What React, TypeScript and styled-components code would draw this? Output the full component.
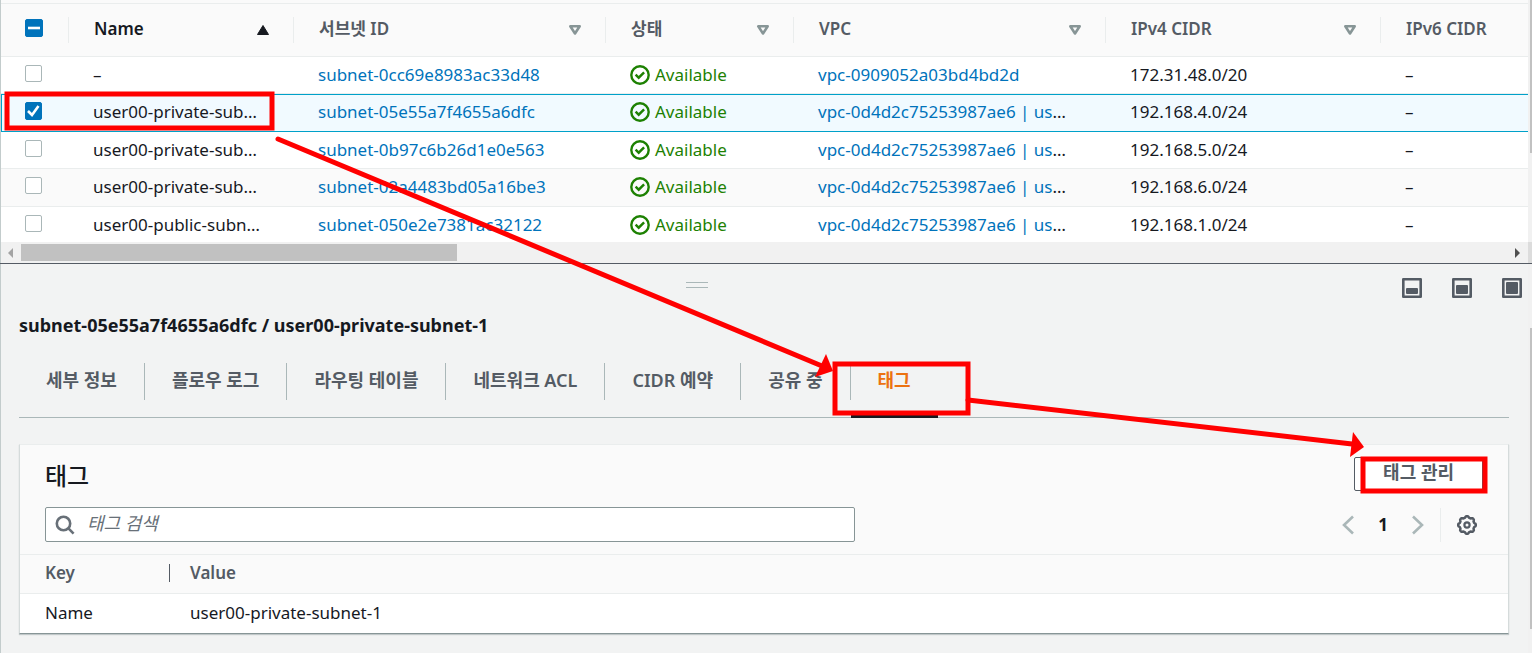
import React from "react";
import styled, { createGlobalStyle, css } from "styled-components";

const Global = createGlobalStyle`
  *, *::before, *::after { box-sizing: border-box; }
  html, body, #root { height: 100%; }
  body {
    margin: 0;
    overflow: hidden;
    background: #f2f3f3;
    color: #16191f;
    font-family: "Noto Sans", "Noto Sans CJK KR", sans-serif;
    font-size: 17px;
    line-height: 24px;
  }
  button, input { font: inherit; color: inherit; margin: 0; }
  a { color: #0073bb; text-decoration: none; }
`;

const Page = styled.div`
  position: relative;
  height: 100%;
  display: flex;
  flex-direction: column;
`;

const ListPane = styled.section`
  display: grid;
  grid-template-columns: minmax(0, 1fr) 4px;
  flex: none;
  background: #fff;
  border-bottom: 1px solid #545b64;
`;

const ListScroll = styled.div`
  overflow: hidden;
  border-left: 1px solid #c3cccc;
  padding-top: 3px;
  background: #fafafa;
`;

const SideTrack = styled.div`
  display: flex;
  flex-direction: column;
  justify-content: space-between;
  background: #f1f1f1;
`;

const SideThumb = styled.div<{ $size: number }>`
  height: ${(p) => p.$size}px;
  margin-left: 2px;
  background: #c1c1c1;
`;

const TrackCorner = styled.div`
  height: 21px;
  background: #dcdcdc;
`;

const SubnetTable = styled.table`
  width: 100%;
  table-layout: fixed;
  border-collapse: separate;
  border-spacing: 0;
  border-top: 1px solid #eaeded;
`;

const Col = styled.col<{ $w?: number }>`
  width: ${(p) => (p.$w ? `${p.$w}px` : "auto")};
`;

const HeadCell = styled.th<{ $sorted?: boolean }>`
  height: 53px;
  padding: 0;
  text-align: left;
  font-weight: 600;
  color: ${(p) => (p.$sorted ? "#16191f" : "#545b64")};
  border-bottom: 1px solid #eaeded;
`;

const HeadInner = styled.div<{ $last?: boolean; $tick?: boolean }>`
  display: flex;
  align-items: center;
  justify-content: space-between;
  height: 26px;
  padding: ${(p) => (p.$tick ? "0 0 4px 24px" : "0 23px 0 25px")};
  border-right: ${(p) => (p.$last ? "0" : "1px solid #eaeded")};
`;

const HeadLabel = styled.span`
  padding-bottom: 3px;
`;

const CheckCell = styled.td`
  padding: 0 0 3px 24px;
`;

const Row = styled.tr<{ $selected?: boolean }>`
  height: 37px;
  background: #fff;
  &:nth-child(even) { height: 38px; background: #fafafa; }
  &:nth-child(even) td { padding-bottom: 2px; }
  &:nth-child(even) td:first-child { padding-bottom: 4px; }
  &:last-child { height: 35px; }
  td { border-bottom: 1px solid #eaeded; }
  &:last-child td { border-bottom: 0; }
  ${(p) =>
    p.$selected &&
    css`
      &&:nth-child(even) { background: #f1faff; }
      && td { border-top: 1px solid #00a1c9; border-bottom: 1px solid #00a1c9; }
      && td:first-child { border-left: 1px solid #00a1c9; padding-left: 23px; }
    `}
`;

const Cell = styled.td`
  padding: 0 0 0 24px;
  white-space: nowrap;
`;

const Tick = styled.input`
  appearance: none;
  display: block;
  width: 17px;
  height: 17px;
  border: 1px solid #aab7b8;
  border-radius: 2px;
  background: #fff;
  &:checked {
    height: 18px;
    border-color: #0073bb;
    background: #0073bb;
  }
`;

const TickBox = styled.label<{ $wide?: boolean }>`
  display: grid;
  width: ${(p) => (p.$wide ? "18px" : "17px")};
  > * { grid-area: 1 / 1; width: 100%; }
  svg { pointer-events: none; z-index: 1; }
`;

const Status = styled.span`
  display: flex;
  align-items: center;
  gap: 5px;
  color: #1d8102;
`;

const ScrollBar = styled.div`
  display: flex;
  align-items: center;
  justify-content: space-between;
  height: 21px;
  padding-right: 7px;
  background: #f1f1f1;
`;

const ScrollLead = styled.div`
  display: flex;
  align-items: center;
  gap: 7px;
  width: 30%;
  height: 17px;
  padding-left: 6px;
`;

const ScrollThumb = styled.div`
  flex: 1;
  height: 17px;
  background: #c1c1c1;
`;

const DetailPane = styled.section`
  flex: 1;
  min-height: 0;
  display: grid;
  grid-template-columns: minmax(0, 1fr) 4px;
  border-left: 1px solid #c3cccc;
`;

const DetailBody = styled.div`
  padding: 0 19px 0 18px;
`;

const DetailTrack = styled(SideTrack)`
  padding-top: 64px;
`;

const SplitBar = styled.div`
  display: grid;
  grid-template-columns: 1fr auto;
  align-items: center;
  gap: 27px;
  height: 48px;
  margin-right: -13px;
`;

const Grip = styled.div`
  width: 22px;
  height: 6px;
  margin-bottom: 6px;
  justify-self: center;
  border: solid #aab7b8;
  border-width: 1px 0;
`;

const LayoutButtons = styled.div`
  display: flex;
  justify-content: flex-end;
  gap: 30px;
`;

const IconButton = styled.button`
  display: flex;
  padding: 0;
  border: 0;
  background: none;
  color: #545b64;
`;

const PaneTitle = styled.h2`
  margin: 1px 0;
  font-size: 18px;
  line-height: 24px;
  font-weight: 700;
`;

const TabList = styled.div`
  display: flex;
  height: 80px;
  padding-top: 25px;
  border-bottom: 1px solid #aab7b8;
`;

const Tab = styled.button<{ $active?: boolean }>`
  position: relative;
  height: 37px;
  padding: 0 27px 4px;
  border: 0;
  border-right: ${(p) => (p.$active ? "0" : "1px solid #aab7b8")};
  background: none;
  font-size: 18px;
  font-weight: 600;
  white-space: nowrap;
  color: ${(p) => (p.$active ? "#ec7211" : "#545b64")};
  ${(p) =>
    p.$active &&
    css`
      &::after {
        content: "";
        position: absolute;
        left: 0;
        right: 0;
        bottom: -18px;
        height: 3px;
        background: #16191f;
      }
    `}
`;

const Card = styled.div`
  margin-top: 26px;
  background: #fff;
  border: 1px solid #eaeded;
  border-color: #eaeded #d5dbdb #879596 #d5dbdb;
  box-shadow: 0 1px 1px rgba(0, 28, 36, 0.2);
`;

const CardHead = styled.header`
  display: flex;
  flex-direction: column;
  gap: 16px;
  padding: 12px 25px;
  background: #fafafa;
`;

const HeadLine = styled.div`
  display: flex;
  align-items: center;
  justify-content: space-between;
`;

const CardTitle = styled.h3`
  margin: 0;
  padding-top: 4px;
  font-size: 24px;
  line-height: 30px;
  font-weight: 500;
`;

const ManageButton = styled.button`
  height: 34px;
  padding: 0 28px 4px;
  border: 1px solid #545b64;
  border-radius: 2px;
  background: #fff;
  font-size: 18px;
  font-weight: 600;
  color: #545b64;
`;

const SearchField = styled.label`
  display: flex;
  align-items: center;
  gap: 12px;
  flex: 0 0 56.3%;
  height: 35px;
  padding: 0 9px;
  border: 1px solid #879596;
  border-radius: 2px;
  background: #fff;
  color: #687078;
`;

const SearchInput = styled.input`
  flex: 1;
  min-width: 0;
  height: 31px;
  padding: 0 0 4px;
  border: 0;
  outline: 0;
  background: none;
  font-size: 18px;
  &::placeholder { color: #687078; font-style: italic; opacity: 1; }
`;

const Pager = styled.nav`
  display: flex;
  align-items: center;
  gap: 24px;
  padding-right: 6px;
  font-weight: 700;
`;

const PagerEnd = styled.div`
  display: flex;
  align-items: center;
  height: 34px;
  margin-left: -8px;
  padding-left: 16px;
  border-left: 1px solid #eaeded;
`;

const TagTable = styled.table`
  width: 100%;
  table-layout: fixed;
  border-collapse: separate;
  border-spacing: 0;
  th {
    height: 40px;
    padding: 0 0 2px;
    text-align: left;
    font-weight: 600;
    color: #545b64;
    background: #fafafa;
    border-top: 1px solid #eaeded;
    border-bottom: 1px solid #eaeded;
  }
  td { height: 39px; padding: 0 20px 2px; }
  td:first-child { padding-left: 25px; }
`;

const TagHead = styled.div<{ $first?: boolean }>`
  height: 18px;
  line-height: 18px;
  padding-left: ${(p) => (p.$first ? "25px" : "20px")};
  border-right: ${(p) => (p.$first ? "1px solid #545b64" : "0")};
`;

const Annotations = styled.svg`
  position: absolute;
  top: 0;
  left: 0;
  pointer-events: none;
`;

const SortDown = () => (
  <svg width="14" height="12" viewBox="0 0 14 12" fill="none" stroke="#879596" strokeWidth="2.600" strokeLinejoin="round">
    <path d="M2.300 2.300h9.400L7 9.500z" />
  </svg>
);

const SortUp = () => (
  <svg width="14" height="12" viewBox="0 0 14 12">
    <path d="M7 1.500l5.500 9h-11z" fill="#16191f" stroke="#16191f" strokeLinejoin="round" />
  </svg>
);

const OkIcon = () => (
  <svg width="20" height="20" viewBox="0 0 20 20" fill="none" stroke="#1d8102" strokeWidth="2.400">
    <circle cx="10" cy="10" r="8.700" />
    <path d="M5.600 9.700l3.100 3 5.400-5.400" />
  </svg>
);

const PaneIcon = ({ y }: { y: number }) => (
  <svg width="20" height="20" viewBox="0 0 20 20">
    <rect x="1.300" y="1.300" width="17.400" height="17.400" fill="none" stroke="currentColor" strokeWidth="2.600" strokeLinejoin="round" />
    <rect x="4" y={y} width="12" height={16 - y} rx="1" fill="currentColor" />
  </svg>
);

const SearchIcon = () => (
  <svg width="20" height="20" viewBox="0 0 20 20" fill="none" stroke="#687078" strokeWidth="2.600">
    <circle cx="8.500" cy="8.500" r="6.700" />
    <path d="M13.200 13.200l5.400 5.400" />
  </svg>
);

const Chevron = ({ flip }: { flip?: boolean }) => (
  <svg width="12" height="20" viewBox="0 0 12 20" fill="none" stroke="#aab7b8" strokeWidth="2.600">
    <path d={flip ? "M1 1.500l9 8.500-9 8.500" : "M11 1.500L2 10l9 8.500"} />
  </svg>
);

const GearIcon = () => {
  const points = Array.from({ length: 96 }, (_, i) => {
    const a = (i / 96) * Math.PI * 2;
    const r = 8.1 + 0.7 * Math.tanh(2 * Math.cos(8 * a));
    return `${(10 + r * Math.cos(a)).toFixed(2)},${(10 + r * Math.sin(a)).toFixed(2)}`;
  }).join(" ");
  return (
    <svg width="20" height="20" viewBox="0 0 20 20" fill="none" stroke="#545b64" strokeWidth="2.500">
      <polygon points={points} strokeLinejoin="round" />
      <circle cx="10" cy="10" r="2.600" strokeWidth="2.200" />
    </svg>
  );
};

const vpc = "vpc-0d4d2c75253987ae6 | us";
const rows = [
  { name: "–", id: "subnet-0cc69e8983ac33d48", vpc: "vpc-0909052a03bd4bd2d", cidr: "172.31.48.0/20" },
  { name: "user00-private-sub…", id: "subnet-05e55a7f4655a6dfc", vpc, more: true, cidr: "192.168.4.0/24", on: true },
  { name: "user00-private-sub…", id: "subnet-0b97c6b26d1e0e563", vpc, more: true, cidr: "192.168.5.0/24" },
  { name: "user00-private-sub…", id: "subnet-02a4483bd05a16be3", vpc, more: true, cidr: "192.168.6.0/24" },
  { name: "user00-public-subn…", id: "subnet-050e2e7381ac32122", vpc, more: true, cidr: "192.168.1.0/24" },
];

const columns = ["Name", "서브넷 ID", "상태", "VPC", "IPv4 CIDR", "IPv6 CIDR"];
const tabs = ["세부 정보", "플로우 로그", "라우팅 테이블", "네트워크 ACL", "CIDR 예약", "공유 중", "태그"];

export default function App() {
  return (
    <>
      <Global />
      <Page>
        <ListPane>
          <ListScroll>
            <SubnetTable>
              <colgroup>
                <Col $w={68} />
                <Col $w={225} />
                <Col $w={312} />
                <Col $w={188} />
                <Col $w={312} />
                <Col $w={275} />
                <Col />
              </colgroup>
              <thead>
                <tr>
                  <HeadCell>
                    <HeadInner $tick>
                      <TickBox $wide>
                        <Tick type="checkbox" defaultChecked aria-label="Select all" />
                        <svg height="18" viewBox="0 0 18 18">
                          <path d="M3 9h12" stroke="#fff" strokeWidth="2.600" />
                        </svg>
                      </TickBox>
                    </HeadInner>
                  </HeadCell>
                  {columns.map((c, i) => (
                    <HeadCell key={c} $sorted={i === 0}>
                      <HeadInner $last={i === 5}>
                        <HeadLabel>{c}</HeadLabel>
                        {i === 0 ? <SortUp /> : i < 5 ? <SortDown /> : null}
                      </HeadInner>
                    </HeadCell>
                  ))}
                </tr>
              </thead>
              <tbody>
                {rows.map((r) => (
                  <Row key={r.id} $selected={r.on}>
                    <CheckCell>
                      <TickBox>
                        <Tick type="checkbox" defaultChecked={r.on} aria-label={r.name} />
                        {r.on && (
                          <svg height="18" viewBox="0 0 17 18">
                            <path d="M3 9l4 4 6.500-9" fill="none" stroke="#fff" strokeWidth="2.600" />
                          </svg>
                        )}
                      </TickBox>
                    </CheckCell>
                    <Cell>{r.name}</Cell>
                    <Cell><a href="#subnet">{r.id}</a></Cell>
                    <Cell><Status><OkIcon />Available</Status></Cell>
                    <Cell><a href="#vpc">{r.vpc}</a>{r.more && "…"}</Cell>
                    <Cell>{r.cidr}</Cell>
                    <Cell>–</Cell>
                  </Row>
                ))}
              </tbody>
            </SubnetTable>
            <ScrollBar>
              <ScrollLead>
                <svg width="7" height="10" viewBox="0 0 7 10"><path d="M6 0v10L1 5z" fill="#a3a3a3" /></svg>
                <ScrollThumb />
              </ScrollLead>
              <svg width="7" height="10" viewBox="0 0 7 10"><path d="M1 0v10l5-5z" fill="#505050" /></svg>
            </ScrollBar>
          </ListScroll>
          <SideTrack>
            <SideThumb $size={153} />
            <TrackCorner />
          </SideTrack>
        </ListPane>

        <DetailPane>
          <DetailBody>
            <SplitBar>
              <Grip />
              <LayoutButtons>
                <IconButton aria-label="Small panel"><PaneIcon y={10} /></IconButton>
                <IconButton aria-label="Medium panel"><PaneIcon y={7} /></IconButton>
                <IconButton aria-label="Full panel"><PaneIcon y={4} /></IconButton>
              </LayoutButtons>
            </SplitBar>
            <PaneTitle>subnet-05e55a7f4655a6dfc / user00-private-subnet-1</PaneTitle>
            <TabList role="tablist">
              {tabs.map((t, i) => (
                <Tab key={t} role="tab" aria-selected={i === 6} $active={i === 6}>{t}</Tab>
              ))}
            </TabList>
            <Card>
              <CardHead>
                <HeadLine>
                  <CardTitle>태그</CardTitle>
                  <ManageButton>태그 관리</ManageButton>
                </HeadLine>
                <HeadLine>
                  <SearchField>
                    <SearchIcon />
                    <SearchInput placeholder="태그 검색" aria-label="태그 검색" />
                  </SearchField>
                  <Pager>
                    <IconButton aria-label="Previous page"><Chevron /></IconButton>
                    1
                    <IconButton aria-label="Next page"><Chevron flip /></IconButton>
                    <PagerEnd>
                      <IconButton aria-label="Preferences"><GearIcon /></IconButton>
                    </PagerEnd>
                  </Pager>
                </HeadLine>
              </CardHead>
              <TagTable>
                <colgroup>
                  <Col $w={150} />
                  <Col />
                </colgroup>
                <thead>
                  <tr>
                    <th><TagHead $first>Key</TagHead></th>
                    <th><TagHead>Value</TagHead></th>
                  </tr>
                </thead>
                <tbody>
                  <tr>
                    <td>Name</td>
                    <td>user00-private-subnet-1</td>
                  </tr>
                </tbody>
              </TagTable>
            </Card>
          </DetailBody>
          <DetailTrack><SideThumb $size={301} /></DetailTrack>
        </DetailPane>

        <Annotations width="1532" height="653" viewBox="0 0 1532 653" fill="none" stroke="#f00" strokeWidth="5">
          <rect x="7" y="94" width="265" height="34" />
          <rect x="835" y="364" width="133" height="49" />
          <rect x="1363" y="459" width="122" height="32" />
          <path d="M278 139L822 366" strokeLinecap="round" />
          <path d="M968 400L1352 444" strokeLinecap="round" />
          <path d="M826 354L833 371 815 377z" fill="#f00" stroke="none" />
          <path d="M1353 432L1364 447 1350 457z" fill="#f00" stroke="none" />
        </Annotations>
      </Page>
    </>
  );
}
